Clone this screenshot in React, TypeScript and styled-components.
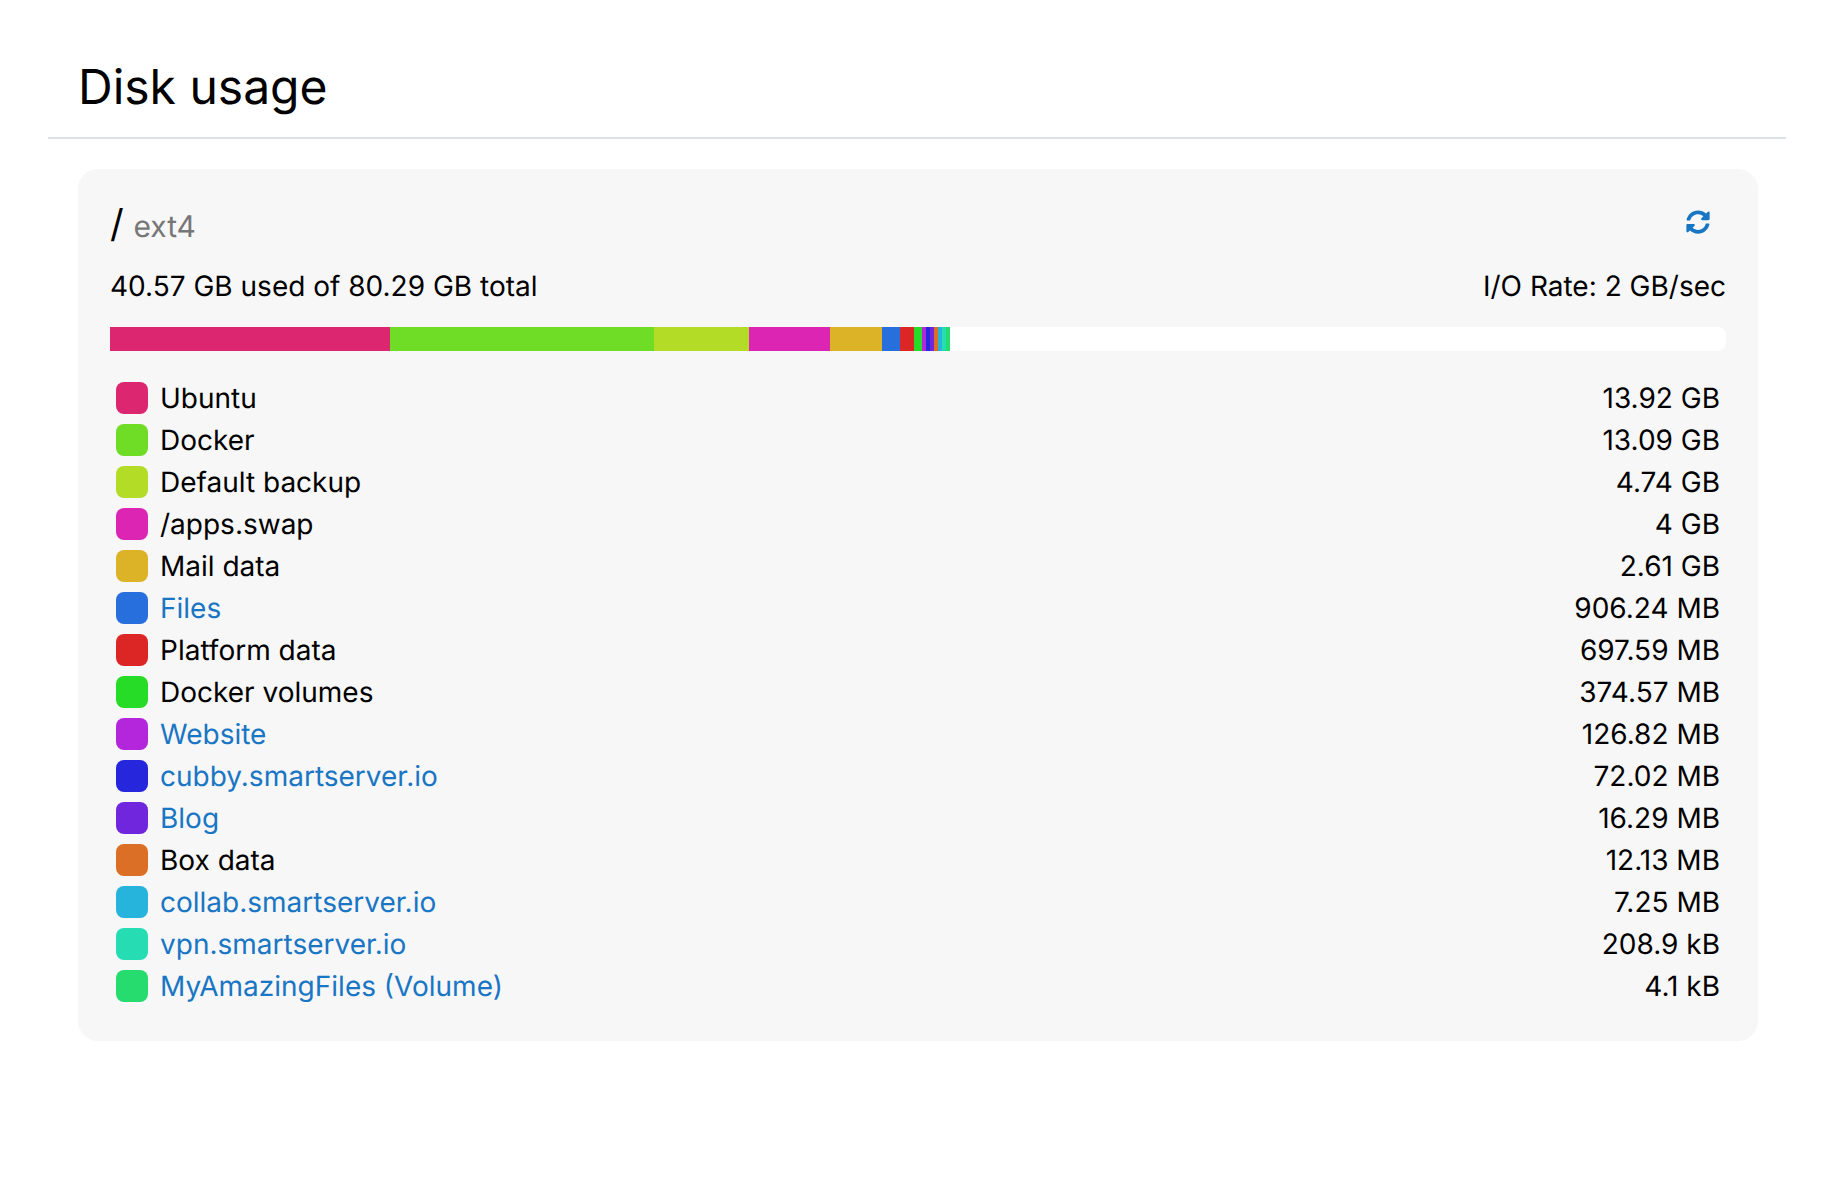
import React from "react";
import styled, { createGlobalStyle } from "styled-components";
import { FaSyncAlt } from "react-icons/fa";

const Global = createGlobalStyle`
  html, body { margin: 0; padding: 0; background: #fff; }
  body { font-family: Inter, "Liberation Sans", sans-serif; color: #000; text-rendering: geometricPrecision; }
`;

const Page = styled.div`
  padding: 0 48px;
  width: 1834px;
  box-sizing: border-box;
`;
const Header = styled.header`
  height: 139px;
  box-sizing: border-box;
  padding: 54px 30px 0;
  border-bottom: 2px solid #dee2e6;
  margin-bottom: 30px;
`;
const Title = styled.h1`
  margin: 0;
  font-size: 48px;
  line-height: 66px;
  font-weight: 400;
`;
const Card = styled.section`
  margin: 0 28px 0 30px;
  background: #f7f7f7;
  border-radius: 20px;
  padding: 32px 32px 32px;
  height: 872px;
  box-sizing: border-box;
`;
const CardHead = styled.div`
  display: flex;
  justify-content: space-between;
  align-items: flex-start;
  height: 48px;
`;
const Mount = styled.div`
  font-size: 38px;
  line-height: 46px;
`;
const Fs = styled.span`
  font-size: 30px;
  color: #777;
  margin-left: -1px;
`;
const Refresh = styled.button`
  border: 0;
  background: none;
  padding: 0;
  margin: 9px 16px 0 0;
  color: #1976c4;
  font-size: 24px;
  line-height: 0;
`;
const Stats = styled.div`
  display: flex;
  justify-content: space-between;
  font-size: 28px;
  line-height: 40px;
  margin-top: 17px;
`;
const Bar = styled.div`
  display: flex;
  height: 24px;
  margin-top: 21px;
  background: #fff;
  border-radius: 8px;
`;
const Segment = styled.div<{ $color: string }>`
  background: ${(p) => p.$color};
  height: 100%;
`;
const List = styled.div`
  margin-top: 26px;
  padding: 0 6px 0 6px;
`;
const Row = styled.div`
  display: flex;
  align-items: center;
  height: 42px;
  font-size: 28px;
`;
const Swatch = styled.span<{ $color: string }>`
  width: 32px;
  height: 32px;
  border-radius: 8px;
  background: ${(p) => p.$color};
  margin-right: 12px;
  flex: none;
`;
const Name = styled.span`
  flex: 1;
`;
const LinkName = styled.a`
  flex: 1;
  color: #1976c4;
  text-decoration: none;
`;

const rows = [
  { name: "Ubuntu", size: "13.92 GB", bytes: 13.92, color: "#dc266f" },
  { name: "Docker", size: "13.09 GB", bytes: 13.09, color: "#6fdc26" },
  { name: "Default backup", size: "4.74 GB", bytes: 4.74, color: "#b3dc26" },
  { name: "/apps.swap", size: "4 GB", bytes: 4, color: "#dc26b3" },
  { name: "Mail data", size: "2.61 GB", bytes: 2.61, color: "#dcb326" },
  { name: "Files", size: "906.24 MB", bytes: 0.90624, color: "#266fdc", link: true },
  { name: "Platform data", size: "697.59 MB", bytes: 0.69759, color: "#dc2626" },
  { name: "Docker volumes", size: "374.57 MB", bytes: 0.37457, color: "#26dc26" },
  { name: "Website", size: "126.82 MB", bytes: 0.2, color: "#b326dc", link: true },
  { name: "cubby.smartserver.io", size: "72.02 MB", bytes: 0.2, color: "#2626dc", link: true },
  { name: "Blog", size: "16.29 MB", bytes: 0.2, color: "#6f26dc", link: true },
  { name: "Box data", size: "12.13 MB", bytes: 0.2, color: "#dc6f26" },
  { name: "collab.smartserver.io", size: "7.25 MB", bytes: 0.2, color: "#26b3dc", link: true },
  { name: "vpn.smartserver.io", size: "208.9 kB", bytes: 0.2, color: "#26dcb3", link: true },
  { name: "MyAmazingFiles (Volume)", size: "4.1 kB", bytes: 0.2, color: "#26dc6f", link: true },
];

const TOTAL = 80.29;

export default function App() {
  return (
    <Page>
      <Global />
      <Header>
        <Title>Disk usage</Title>
      </Header>
      <Card>
        <CardHead>
          <Mount>
            / <Fs>ext4</Fs>
          </Mount>
          <Refresh aria-label="Refresh">
            <FaSyncAlt />
          </Refresh>
        </CardHead>
        <Stats>
          <span>40.57 GB used of 80.29 GB total</span>
          <span>I/O Rate: 2 GB/sec</span>
        </Stats>
        <Bar>
          {rows.map((r) => (
            <Segment key={r.name} $color={r.color} style={{ width: `${(r.bytes / TOTAL) * 100}%` }} />
          ))}
        </Bar>
        <List>
          {rows.map((r) => (
            <Row key={r.name}>
              <Swatch $color={r.color} />
              {r.link ? <LinkName href="#">{r.name}</LinkName> : <Name>{r.name}</Name>}
              <span>{r.size}</span>
            </Row>
          ))}
        </List>
      </Card>
    </Page>
  );
}
